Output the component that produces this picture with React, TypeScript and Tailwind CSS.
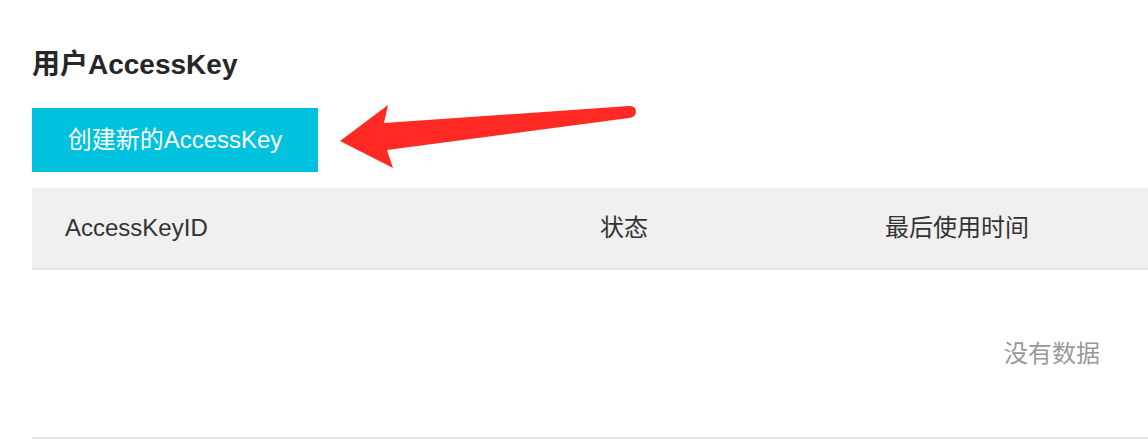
import React from "react";

export default function App() {
  const font = { fontFamily: '"Liberation Sans", "Noto Sans CJK SC", sans-serif' };
  return (
    <div className="relative w-[1148px] h-[446px] overflow-hidden bg-white text-[#333]" style={font}>
      <div className="pl-8 pt-[48px]">
        <h2 className="text-[28px] leading-[34px] font-bold text-[#262626]">用户AccessKey</h2>
        <button className="mt-[26px] w-[286px] h-[64px] bg-[#00c1de] text-white text-[24px] flex items-center justify-center">
          创建新的AccessKey
        </button>
        <div className="mt-4 w-[2040px]">
          <div className="flex h-[82px] items-center bg-[#f0f0f0] border-b-2 border-[#e5e5e5] text-[24px] text-[#333]">
            <div className="w-[568px] pl-[33px]">AccessKeyID</div>
            <div className="w-[285px]">状态</div>
            <div className="flex-1">最后使用时间</div>
          </div>
          <div className="flex h-[169px] items-center justify-center border-b-2 border-[#e5e5e5] text-[24px] text-[#999]">
            没有数据
          </div>
        </div>
      </div>
      <svg className="absolute left-0 top-0" width="1148" height="446" viewBox="0 0 1148 446">
        <path
          d="M340 141 L388 105 L384 123 L629 106 Q636 105.5 636 112 Q636 117 629 118 L387 150 L393 168 Z"
          fill="#ff2a24"
        />
      </svg>
    </div>
  );
}
